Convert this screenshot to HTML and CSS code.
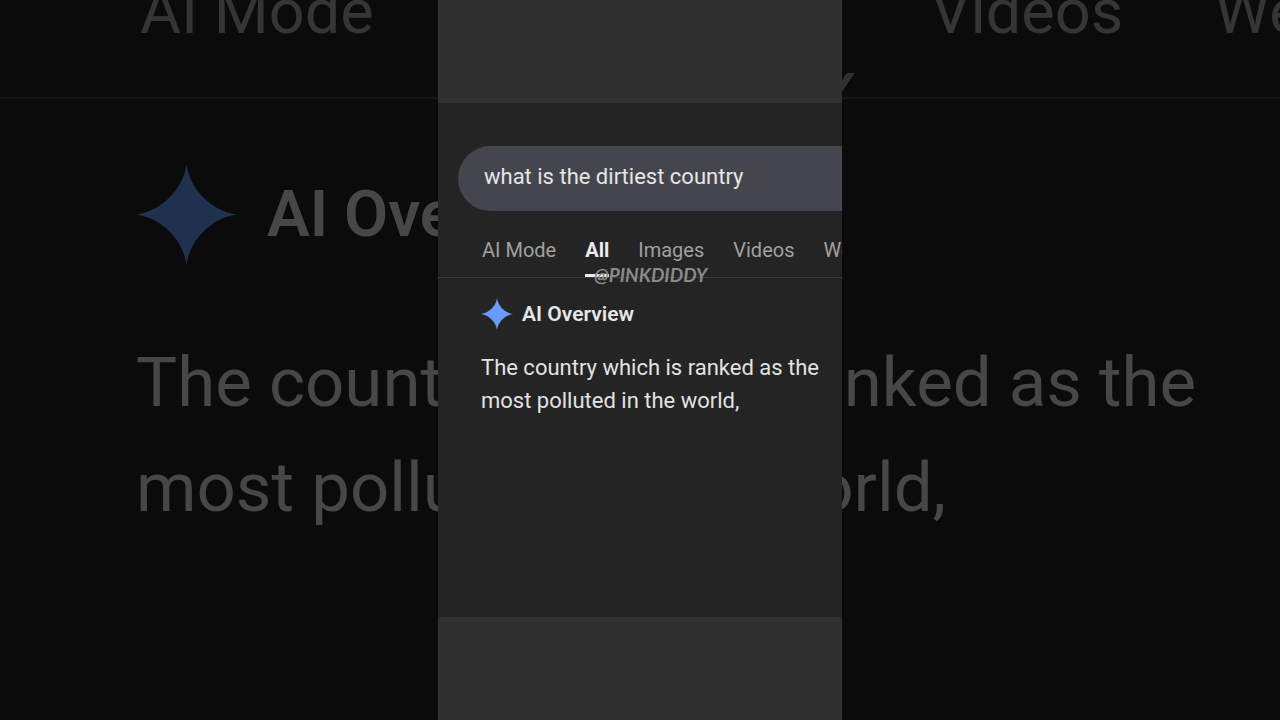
FILE: index.html
```html
<!DOCTYPE html>
<html lang="en">
<head>
<meta charset="utf-8">
<meta name="viewport" content="width=device-width, initial-scale=1">
<title>what is the dirtiest country</title>
<link rel="stylesheet" href="styles.css">
</head>
<body>
<div class="stage">
  <div class="backdrop" aria-hidden="true">
    <div class="backdrop-tabs">
      <span>AI Mode</span><span class="active">All</span><span>Images</span><span>Videos</span><span>Web</span>
      <div class="backdrop-mark">@PINKDIDDY</div>
    </div>
    <div class="backdrop-body">
      <div class="backdrop-heading">
        <svg class="backdrop-spark" viewBox="0 0 32 32"><path d="M16 0C17 8 24 15 32 16C24 17 17 24 16 32C15 24 8 17 0 16C8 15 15 8 16 0Z"/></svg>
        <span>AI Overview</span>
      </div>
      <div class="backdrop-answer">The country which is ranked as the<br>most polluted in the world,</div>
    </div>
  </div>
  <main class="phone">
    <div class="screen">
      <form class="search" role="search">
        <input class="search-input" type="text" aria-label="Search" value="what is the dirtiest country">
      </form>
      <nav class="tabs">
        <a class="tab" href="#">AI Mode</a>
        <a class="tab active" href="#" aria-current="page">All</a>
        <a class="tab" href="#">Images</a>
        <a class="tab" href="#">Videos</a>
        <a class="tab" href="#">Web</a>
      </nav>
      <div class="watermark">@PINKDIDDY</div>
      <section class="overview">
        <h2 class="heading">
          <svg class="spark" viewBox="0 0 32 32" aria-hidden="true"><path d="M16 0C17 8 24 15 32 16C24 17 17 24 16 32C15 24 8 17 0 16C8 15 15 8 16 0Z"/></svg>
          <span>AI Overview</span>
        </h2>
        <p class="answer">The country which is ranked as the<br>most polluted in the world,</p>
      </section>
    </div>
  </main>
</div>
</body>
</html>
```
FILE: styles.css
```css
* { box-sizing: border-box; }
body {
  margin: 0;
  background: #0b0b0b;
  font-family: Roboto, "Liberation Sans", sans-serif;
}
.stage {
  position: relative;
  display: flex;
  justify-content: center;
  min-height: 100vh;
  overflow: hidden;
}

/* Dimmed, enlarged copy behind the phone */
.backdrop {
  position: absolute;
  inset: -20px 0 0;
  color: #474747;
  white-space: nowrap;
}
.backdrop-tabs {
  position: relative;
  display: flex;
  gap: 91px;
  height: 119px;
  padding-left: 140px;
  border-bottom: 2px solid #161616;
  color: #353535;
  font-size: 63px;
  line-height: 64px;
}
.backdrop-tabs .active { font-weight: 700; }
.backdrop-mark {
  position: absolute;
  left: 494px;
  bottom: -28px;
  color: #303030;
  font: italic 700 60px/64px Lato, sans-serif;
}
.backdrop-body { padding: 65px 0 0 136px; }
.backdrop-heading {
  display: flex;
  align-items: center;
  gap: 30px;
  font-size: 64px;
  font-weight: 600;
  line-height: 100px;
}
.backdrop-spark { width: 101px; height: 101px; fill: #20304f; }
.backdrop-answer {
  margin-top: 65px;
  font-size: 69px;
  line-height: 105px;
}

.phone {
  position: relative;
  display: grid;
  grid-template-rows: 103fr 514fr 103fr;
  height: 100vh;
  aspect-ratio: 101 / 180;
  background: #303030;
}
.screen {
  position: relative;
  grid-row: 2;
  min-width: 0;
  overflow: hidden;
  background: #242424;
}
.search { padding: 43px 0 0 20px; }
.search-input {
  display: block;
  width: 100%;
  height: 65px;
  padding: 0 0 4px 26px;
  border: 0;
  border-radius: 33px 0 0 33px;
  outline: 0;
  background: #45454d;
  color: #e6e6e8;
  font: 22px/28px Roboto, sans-serif;
}
.tabs {
  display: flex;
  gap: 29px;
  height: 67px;
  padding: 26px 0 0 44px;
  border-bottom: 1px solid #3d3d3d;
  overflow: hidden;
}
.tab {
  flex: none;
  color: #a0a0a0;
  font-size: 20px;
  line-height: 26px;
  text-decoration: none;
}
.tab.active {
  border-bottom: 3px solid #ececec;
  color: #ececec;
  font-weight: 700;
}
.watermark {
  position: absolute;
  top: 161px;
  left: 156px;
  color: #8a8a8a;
  font: italic 700 19px/22px Lato, sans-serif;
}
.overview { padding: 20px 20px 0 43px; }
.heading {
  display: flex;
  align-items: center;
  gap: 9px;
  margin: 0;
  color: #e6e6e6;
  font-size: 21px;
  font-weight: 600;
  line-height: 32px;
}
.spark { width: 32px; height: 32px; fill: #6b9bfa; }
.answer {
  margin: 21px 0 0;
  color: #e2e2e2;
  font-size: 22px;
  line-height: 33px;
  white-space: nowrap;
}
```
